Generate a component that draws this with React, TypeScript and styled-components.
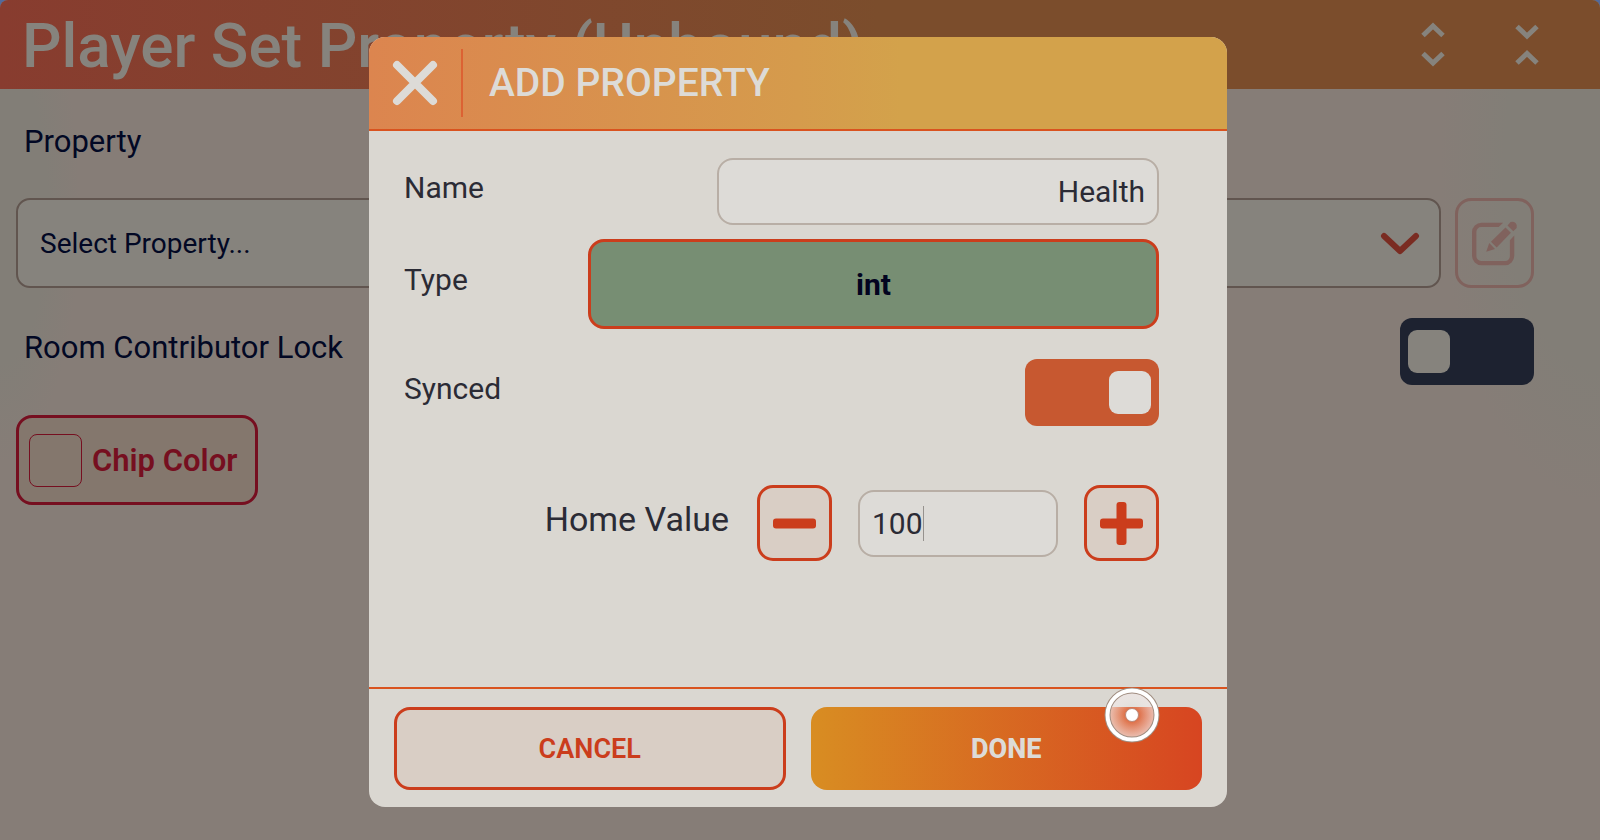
import React, { useState } from "react";
import styled, { createGlobalStyle, css } from "styled-components";

const GlobalStyle = createGlobalStyle`
  *, *::before, *::after { box-sizing: border-box; }
  body { margin: 0; background: #526a9c; font-family: Roboto, "Liberation Sans", sans-serif; }
  button, input, select { font: inherit; margin: 0; }
  button { cursor: pointer; padding: 0; }
  svg { display: block; }
`;

const Page = styled.div`
  position: relative;
  min-height: 100vh;
  border-radius: 8px 8px 0 0;
  overflow: hidden;
  background:
    radial-gradient(ellipse 10% 40% at 100% 20%, #827e77 60%, transparent),
    radial-gradient(ellipse 5% 30% at 0 25%, #827e77 60%, transparent),
    #867d77;
`;

const TopBar = styled.header`
  display: flex;
  align-items: center;
  gap: 34px;
  height: 89px;
  padding: 0 43px 0 22px;
  background: linear-gradient(90deg, #883c2f 0, #7b4d2c 55%);
`;

const PageTitle = styled.h1`
  flex: 1;
  margin: 0;
  padding-top: 2px;
  color: #86837d;
  font-size: 62px;
  font-weight: 500;
  line-height: 72px;
  white-space: nowrap;
`;

const BarButton = styled.button`
  display: grid;
  place-items: center;
  width: 60px;
  height: 60px;
  border: 0;
  background: none;
  color: #86837d;
`;

const PageBody = styled.main`
  display: flex;
  flex-direction: column;
  gap: 30px;
  padding: 35px 66px 30px 16px;
`;

const Row = styled.div`
  display: flex;
  align-items: center;
  justify-content: space-between;
  gap: 14px;
`;

const PageLabel = styled.label`
  padding: 0 8px 8px;
  color: #020824;
  font-size: 31px;
  line-height: 36px;
`;

const SelectBox = styled.div`
  display: grid;
  flex: 1;
  align-items: center;
  color: #7a2c22;

  > * { grid-area: 1 / 1; }
  > svg { justify-self: end; margin: 2px 21px 0 0; pointer-events: none; }
`;

const Select = styled.select`
  appearance: none;
  width: 100%;
  height: 90px;
  padding: 0 72px 0 22px;
  border: 2px solid #61554f;
  border-radius: 14px;
  background: #86837d;
  color: #020824;
  font-size: 28px;
`;

const EditButton = styled.button`
  display: grid;
  place-items: center;
  width: 79px;
  height: 90px;
  border: 3px solid #80625d;
  border-radius: 16px;
  background: none;
  color: #80625d;
`;

const Toggle = styled.input<{ $dim?: boolean }>`
  appearance: none;
  display: flex;
  align-items: center;
  width: 134px;
  height: 67px;
  padding: 0 8px;
  border-radius: 12px;
  background: ${(p) => (p.$dim ? "#1d2230" : "#9a958f")};
  cursor: pointer;

  &::before {
    content: "";
    width: 42px;
    height: 43px;
    border-radius: 9px;
    background: ${(p) => (p.$dim ? "#86837d" : "#dddbd7")};
  }
  &:checked { justify-content: flex-end; background: #c75830; }
`;

const ChipButton = styled.button`
  display: flex;
  align-items: center;
  align-self: flex-start;
  gap: 10px;
  height: 90px;
  padding: 0 18px 0 10px;
  border: 3px solid #760f20;
  border-radius: 16px;
  background: #84776d;
  color: #760f20;
  font-size: 31px;
  font-weight: 600;
`;

const Swatch = styled.span`
  width: 53px;
  height: 53px;
  border: 1px solid #760f20;
  border-radius: 8px;
`;

const Overlay = styled.div`
  position: absolute;
  inset: 0;
  display: flex;
  justify-content: center;
  padding: 37px 20px 33px 16px;
`;

const Dialog = styled.section`
  display: flex;
  flex-direction: column;
  width: 100%;
  max-width: 858px;
  border-radius: 16px;
  overflow: hidden;
  background: #dad7d1;
`;

const DialogHeader = styled.header`
  display: flex;
  align-items: center;
  height: 94px;
  border-bottom: 2px solid #d9531f;
  background: linear-gradient(90deg, #dc854f 0, #d59b4c 50%, #d3a24b 62%);
`;

const CloseButton = styled.button`
  display: grid;
  place-items: center;
  width: 92px;
  height: 68px;
  border: 0;
  background: none;
  color: #dddbd7;
`;

const DialogTitle = styled.h2`
  display: flex;
  align-items: center;
  height: 68px;
  margin: 0;
  padding-left: 26px;
  border-left: 2px solid #dc6233;
  color: #dddbd7;
  font-size: 39px;
  font-weight: 500;
`;

const DialogBody = styled.div`
  flex: 1;
  padding: 27px 68px 27px 33px;
`;

const Field = styled(Row)<{ $space?: number }>`
  margin-top: ${(p) => p.$space ?? 0}px;
`;

const FieldLabel = styled.label<{ $large?: boolean }>`
  padding: 0 2px 8px;
  color: #2b2b35;
  font-size: ${(p) => (p.$large ? 34 : 30)}px;
  line-height: 36px;
`;

const TextBox = styled.input`
  width: 442px;
  height: 67px;
  padding: 0 12px;
  border: 2px solid #b8aea5;
  border-radius: 16px;
  background: #dddbd7;
  color: #2b2b35;
  font-size: 30px;
  outline: none;
`;

const NameBox = styled(TextBox)`
  text-align: right;
`;

const outlined = css`
  border: 3px solid #cb3d1c;
  border-radius: 16px;
  background: #d9cec5;
  color: #cb3d1c;
`;

const TypeButton = styled.button`
  ${outlined}
  width: 571px;
  height: 90px;
  background: #778e73;
  color: #020420;
  font-size: 30px;
  font-weight: 700;
`;

const Stepper = styled(Row)`
  justify-content: flex-end;
  gap: 26px;
`;

const StepButton = styled.button`
  ${outlined}
  display: grid;
  place-items: center;
  width: 75px;
  height: 76px;
`;

const ValueBox = styled.div`
  position: relative;

  ${TextBox} { display: block; width: 200px; caret-color: transparent; }
`;

const Caret = styled.span`
  position: absolute;
  top: 16px;
  left: 65px;
  width: 1px;
  height: 35px;
  background: #96928e;
`;

const DialogFooter = styled.footer`
  display: grid;
  grid-template-columns: 1fr 1fr;
  gap: 25px;
  padding: 18px 25px 17px;
  border-top: 2px solid #d9531f;
`;

const CancelButton = styled.button`
  ${outlined}
  height: 83px;
  font-size: 27px;
  font-weight: 600;
`;

const DoneButton = styled.button`
  height: 83px;
  border: 0;
  border-radius: 16px;
  background: linear-gradient(90deg, #d88d22, #d74521);
  color: #dddbd7;
  font-size: 27px;
  font-weight: 800;
`;

const DoneCell = styled.div`
  position: relative;
  display: grid;
`;

const Pointer = styled.svg`
  position: absolute;
  top: -20px;
  right: 42px;
  pointer-events: none;
`;

const ExpandIcon = () => (
  <svg width="24" height="46" viewBox="0 0 24 46" fill="none" stroke="currentColor" strokeWidth="5">
    <path d="M2 13.500 12 4 22 13.500M2 31.500 12 41 22 31.500" />
  </svg>
);

const CollapseIcon = () => (
  <svg width="24" height="42" viewBox="0 0 24 42" fill="none" stroke="currentColor" strokeWidth="5">
    <path d="M2 2.500 12 12 22 2.500M2 39 12 29.500 22 39" />
  </svg>
);

const ChevronIcon = () => (
  <svg width="40" height="24" viewBox="0 0 40 24" fill="none" stroke="currentColor" strokeWidth="6" strokeLinecap="round" strokeLinejoin="round">
    <path d="M4 4 20 19 36 4" />
  </svg>
);

const EditIcon = () => (
  <svg width="46" height="46" viewBox="0 0 136 136" fill="currentColor">
    <path d="M92 8H28A28 28 0 0 0 0 36V106A28 28 0 0 0 28 134H98A28 28 0 0 0 125 106V46L112 60V106A14 14 0 0 1 98 121H28A14 14 0 0 1 13 106V36A14 14 0 0 1 28 21H79Z" />
    <path d="M42 94 51 68 68 86ZM56 64 99 22 115 38 73 81ZM105 16 114 6A14 14 0 0 1 132 24L122 33Z" />
  </svg>
);

const CloseIcon = () => (
  <svg width="46" height="46" viewBox="0 0 46 46" fill="none" stroke="currentColor" strokeWidth="8" strokeLinecap="round">
    <path d="M5 5 41 41M41 5 5 41" />
  </svg>
);

const MinusIcon = () => (
  <svg width="43" height="43" viewBox="0 0 43 43" fill="currentColor">
    <rect y="16.500" width="43" height="10" rx="3" />
  </svg>
);

const PlusIcon = () => (
  <svg width="43" height="43" viewBox="0 0 43 43" fill="currentColor">
    <rect y="16.500" width="43" height="10" rx="3" />
    <rect x="16.500" width="10" height="43" rx="3" />
  </svg>
);

const PointerMark = () => (
  <Pointer width="56" height="56" viewBox="0 0 56 56" aria-hidden="true">
    <defs>
      <radialGradient id="glow">
        <stop offset="0.2" stopColor="#fff" stopOpacity="0.1" />
        <stop offset="1" stopColor="#f0e6e6" stopOpacity="0.75" />
      </radialGradient>
    </defs>
    <circle cx="28" cy="28" r="23" fill="url(#glow)" />
    <circle cx="28" cy="28" r="24.500" fill="none" stroke="#a08d80" strokeWidth="6" />
    <circle cx="28" cy="28" r="24.500" fill="none" stroke="#fff" strokeWidth="4" />
    <circle cx="28" cy="28" r="6.500" fill="#fff" stroke="#b9897a" strokeWidth="1" />
  </Pointer>
);

export default function App() {
  const [locked, setLocked] = useState(false);
  const [synced, setSynced] = useState(true);
  const [name, setName] = useState("Health");
  const [home, setHome] = useState("100");
  const step = (by: number) => setHome(String((Number(home) || 0) + by));

  return (
    <>
      <GlobalStyle />
      <Page>
        <TopBar>
          <PageTitle>Player Set Property (Unbound)</PageTitle>
          <BarButton aria-label="Expand"><ExpandIcon /></BarButton>
          <BarButton aria-label="Collapse"><CollapseIcon /></BarButton>
        </TopBar>
        <PageBody>
          <PageLabel htmlFor="property">Property</PageLabel>
          <Row>
            <SelectBox>
              <Select id="property">
                <option>Select Property...</option>
              </Select>
              <ChevronIcon />
            </SelectBox>
            <EditButton aria-label="Edit property"><EditIcon /></EditButton>
          </Row>
          <Row>
            <PageLabel htmlFor="lock">Room Contributor Lock</PageLabel>
            <Toggle id="lock" type="checkbox" $dim checked={locked} onChange={(e) => setLocked(e.target.checked)} />
          </Row>
          <ChipButton><Swatch />Chip Color</ChipButton>
        </PageBody>
        <Overlay>
          <Dialog role="dialog" aria-labelledby="dialog-title">
            <DialogHeader>
              <CloseButton aria-label="Close"><CloseIcon /></CloseButton>
              <DialogTitle id="dialog-title">ADD PROPERTY</DialogTitle>
            </DialogHeader>
            <DialogBody>
              <Field>
                <FieldLabel htmlFor="name">Name</FieldLabel>
                <NameBox id="name" value={name} onChange={(e) => setName(e.target.value)} />
              </Field>
              <Field $space={14}>
                <FieldLabel htmlFor="type">Type</FieldLabel>
                <TypeButton id="type">int</TypeButton>
              </Field>
              <Field $space={30}>
                <FieldLabel htmlFor="synced">Synced</FieldLabel>
                <Toggle id="synced" type="checkbox" checked={synced} onChange={(e) => setSynced(e.target.checked)} />
              </Field>
              <Field as={Stepper} $space={59}>
                <FieldLabel htmlFor="home" $large>Home Value</FieldLabel>
                <StepButton aria-label="Decrease" onClick={() => step(-1)}><MinusIcon /></StepButton>
                <ValueBox>
                  <TextBox id="home" inputMode="numeric" value={home} onChange={(e) => setHome(e.target.value)} />
                  <Caret />
                </ValueBox>
                <StepButton aria-label="Increase" onClick={() => step(1)}><PlusIcon /></StepButton>
              </Field>
            </DialogBody>
            <DialogFooter>
              <CancelButton>CANCEL</CancelButton>
              <DoneCell>
                <DoneButton>DONE</DoneButton>
                <PointerMark />
              </DoneCell>
            </DialogFooter>
          </Dialog>
        </Overlay>
      </Page>
    </>
  );
}
